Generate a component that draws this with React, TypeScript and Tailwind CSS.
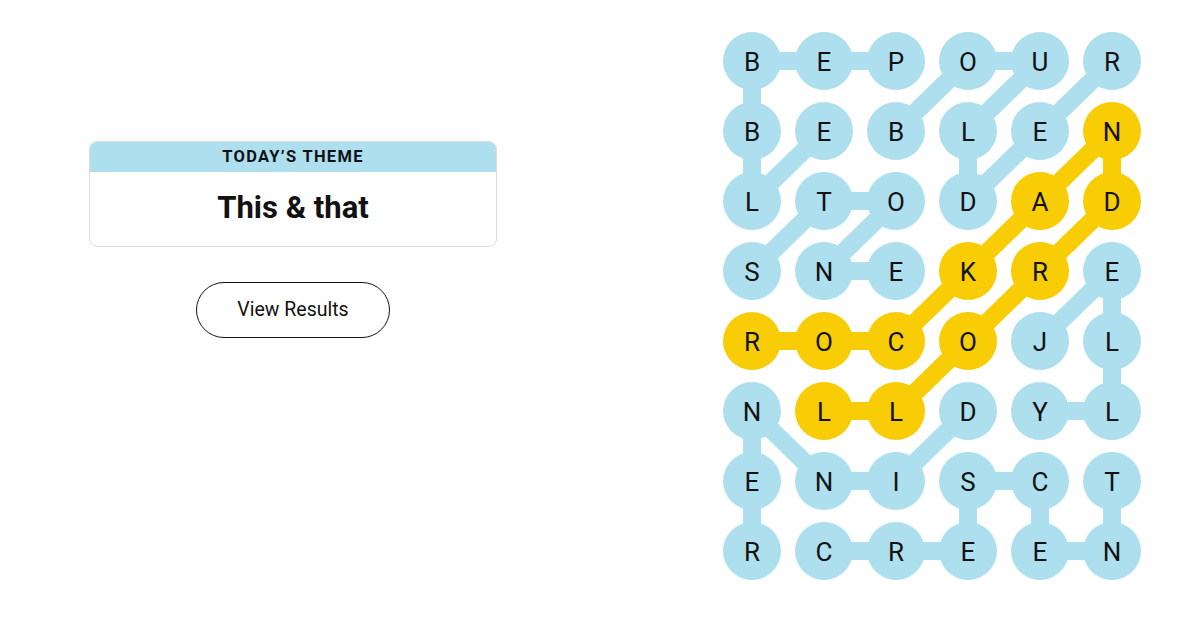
import React from "react";

const GRID = [
  "BEPOUR",
  "BEBLEN",
  "LTODAD",
  "SNEKRE",
  "ROCOJL",
  "NLLDYL",
  "ENISCT",
  "RCREEN",
];

type P = [number, number];

const BLUE_WORDS: P[][] = [
  [[0, 2], [0, 1], [0, 0], [1, 0], [2, 0], [1, 1]],
  [[3, 0], [2, 1], [2, 2], [3, 1], [3, 2]],
  [[1, 2], [0, 3], [0, 4], [1, 3], [2, 3], [1, 4], [0, 5]],
  [[4, 4], [3, 5], [4, 5], [5, 5], [5, 4]],
  [[5, 3], [6, 2], [6, 1], [5, 0], [6, 0], [7, 0]],
  [[7, 1], [7, 2], [7, 3], [6, 3], [6, 4], [7, 4], [7, 5], [6, 5]],
];

const YELLOW: P[] = [
  [4, 0], [4, 1], [4, 2], [3, 3], [2, 4], [1, 5], [2, 5], [3, 4], [4, 3], [5, 2], [5, 1],
];

const BLUE = "#aedfee";
const YEL = "#f8cd05";

const cx = (c: number) => 32 + 72 * c;
const cy = (r: number) => 32 + 70 * r;

function Path({ pts, color }: { pts: P[]; color: string }) {
  const d = pts.map((p, i) => `${i === 0 ? "M" : "L"}${cx(p[1])} ${cy(p[0])}`).join(" ");
  return <path d={d} stroke={color} strokeWidth={18} fill="none" strokeLinejoin="round" strokeLinecap="round" />;
}

export default function App() {
  const yellowSet = new Set(YELLOW.map((p) => `${p[0]}-${p[1]}`));
  return (
    <div className="w-[1200px] h-[618px] bg-white flex overflow-hidden font-['Roboto','Liberation_Sans',sans-serif] text-[#121212]">
      <div className="w-[586px] flex flex-col items-center pt-[141px]">
        <div className="w-[408px] rounded-[8px] border border-[#dcdcdc] overflow-hidden">
          <div className="h-[30px] bg-[#aedfee] flex items-center justify-center text-[16.5px] font-bold tracking-[1.3px]">
            TODAY’S THEME
          </div>
          <div className="h-[74px] flex items-center justify-center text-[31px] font-bold pb-[2px]">
            This &amp; that
          </div>
        </div>
        <button className="mt-[35px] w-[194px] h-[56px] rounded-full border-[1.5px] border-[#121212] bg-white text-[19.5px]">
          View Results
        </button>
      </div>
      <div className="pt-[29px] pl-[134px]">
        <svg width={424} height={554} viewBox="0 0 424 554">
          {BLUE_WORDS.map((w, i) => (
            <Path key={i} pts={w} color={BLUE} />
          ))}
          <Path pts={YELLOW} color={YEL} />
          {GRID.map((row, r) =>
            row.split("").map((ch, c) => (
              <g key={`${r}-${c}`}>
                <circle cx={cx(c)} cy={cy(r)} r={29} fill={yellowSet.has(`${r}-${c}`) ? YEL : BLUE} />
                <text
                  x={cx(c)}
                  y={cy(r) + 9.5}
                  textAnchor="middle"
                  fontSize={26}
                  fill="#121212"
                  className="font-['Roboto','Liberation_Sans',sans-serif]"
                >
                  {ch}
                </text>
              </g>
            ))
          )}
        </svg>
      </div>
    </div>
  );
}
